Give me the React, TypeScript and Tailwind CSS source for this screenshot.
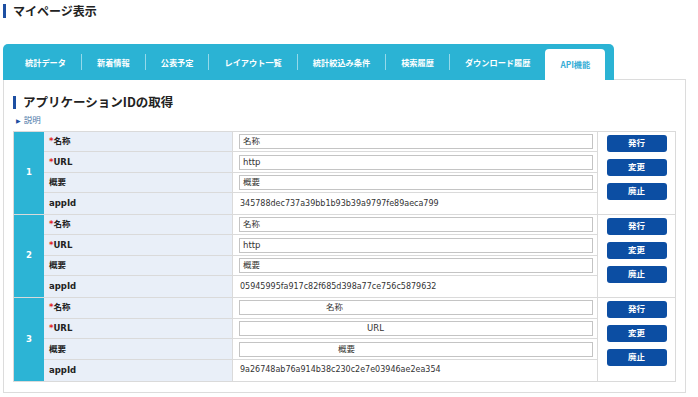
const tabs = [
  "統計データ",
  "新着情報",
  "公表予定",
  "レイアウト一覧",
  "統計絞込み条件",
  "検索履歴",
  "ダウンロード履歴",
];

type Entry = {
  no: string;
  name: string;
  url: string;
  summary: string;
  appId: string;
  namePad?: string;
  urlPad?: string;
  summaryPad?: string;
};

const entries: Entry[] = [
  {
    no: "1",
    name: "名称",
    url: "http",
    summary: "概要",
    appId: "345788dec737a39bb1b93b39a9797fe89aeca799",
  },
  {
    no: "2",
    name: "名称",
    url: "http",
    summary: "概要",
    appId: "05945995fa917c82f685d398a77ce756c5879632",
  },
  {
    no: "3",
    name: "名称",
    url: "URL",
    summary: "概要",
    appId: "9a26748ab76a914b38c230c2e7e03946ae2ea354",
    namePad: "pl-[86px]",
    urlPad: "pl-[127px]",
    summaryPad: "pl-[98px]",
  },
];

function Label({ text, required }: { text: string; required?: boolean }) {
  return (
    <div className="flex items-center bg-[#e9eff8] pl-[5px] text-[8.5px] font-bold text-[#222]">
      {required && <span className="text-[#e2231a]">*</span>}
      <span>{text}</span>
    </div>
  );
}

function Field({ value, pad }: { value: string; pad?: string }) {
  return (
    <div className="flex items-center pl-[6px]">
      <div
        className={`flex h-[15px] w-[354px] items-center border border-[#c4c4c4] bg-white text-[8.5px] text-[#333] ${pad ?? "pl-[3px]"}`}
      >
        {value}
      </div>
    </div>
  );
}

function Group({ e, last }: { e: Entry; last: boolean }) {
  return (
    <div className={`flex h-[83px] ${last ? "" : "border-b border-[#dadada]"}`}>
      <div className="flex w-[30px] items-center justify-center bg-[#2cb4d5] text-[8.5px] font-bold text-white">
        {e.no}
      </div>
      <div className="grid w-[189px] grid-rows-4 divide-y divide-[#dadada] border-r border-[#dadada]">
        <Label text="名称" required />
        <Label text="URL" required />
        <Label text="概要" />
        <Label text="appId" />
      </div>
      <div className="grid w-[365px] grid-rows-4 divide-y divide-[#dadada] border-r border-[#dadada]">
        <Field value={e.name} pad={e.namePad} />
        <Field value={e.url} pad={e.urlPad} />
        <Field value={e.summary} pad={e.summaryPad} />
        <div className="flex items-center pl-[7px] text-[8px] text-[#333]">{e.appId}</div>
      </div>
      <div className="flex flex-1 flex-col items-center gap-[7px] pt-[3px]">
        {["発行", "変更", "廃止"].map((b) => (
          <button
            key={b}
            className="flex h-[17px] w-[60px] items-center justify-center rounded-[3px] bg-[#0c4ea3] text-[8.5px] font-bold text-white"
          >
            {b}
          </button>
        ))}
      </div>
    </div>
  );
}

export default function App() {
  return (
    <div className="h-[397px] w-[698px] overflow-hidden bg-white font-['DejaVu_Sans','Noto_Sans_CJK_JP',sans-serif] text-[#222]">
      {/* page title */}
      <div className="flex items-center pl-[3px] pt-[4px]">
        <div className="h-[14px] w-[3px] bg-[#1d4fa2]" />
        <h1 className="ml-[7px] font-['Noto_Sans_CJK_JP',sans-serif] text-[12px] font-bold leading-[14px]">
          マイページ表示
        </h1>
      </div>

      <div className="ml-[3px] mt-[26px] w-[683px]">
        {/* tabs */}
        <div className="flex">
          <div className="flex h-[36px] w-[611px] shrink-0 items-end rounded-t-[5px] bg-[#2bb3d4] pl-[7px] font-['Noto_Sans_CJK_JP',sans-serif]">
            {tabs.map((t, i) => (
              <div key={t} className="flex h-full shrink-0 items-center">
                {i > 0 && <span className="h-[16px] w-px bg-white/50" />}
                <span className="whitespace-nowrap px-[15px] text-[8.2px] font-bold text-white">{t}</span>
              </div>
            ))}
            <div className="flex h-[31px] shrink-0 items-center whitespace-nowrap rounded-t-[4px] bg-white px-[15px] text-[8.2px] font-bold text-[#38aed6]">
              API機能
            </div>
          </div>
          <div className="flex-1 self-end border-b border-[#dcdcdc]" />
        </div>

        {/* panel */}
        <div className="h-[313px] border-x border-b border-[#dcdcdc] px-[9px] pt-[15px]">
          <div className="flex items-center">
            <div className="h-[13px] w-[3px] bg-[#1d4fa2]" />
            <h2 className="ml-[7px] font-['Noto_Sans_CJK_JP',sans-serif] text-[12.5px] font-bold leading-[14px] text-[#222]">
              アプリケーションIDの取得
            </h2>
          </div>
          <div className="mt-[5px] flex items-center pl-[3px] text-[8.5px] text-[#4a78a8]">
            <span className="text-[6px] text-[#1d4fa2]">▶</span>
            <span className="ml-[3px]">説明</span>
          </div>
          <div className="mt-[4px] w-[663px] border border-[#dadada]">
            {entries.map((e, i) => (
              <Group key={e.no} e={e} last={i === entries.length - 1} />
            ))}
          </div>
        </div>
      </div>
    </div>
  );
}
